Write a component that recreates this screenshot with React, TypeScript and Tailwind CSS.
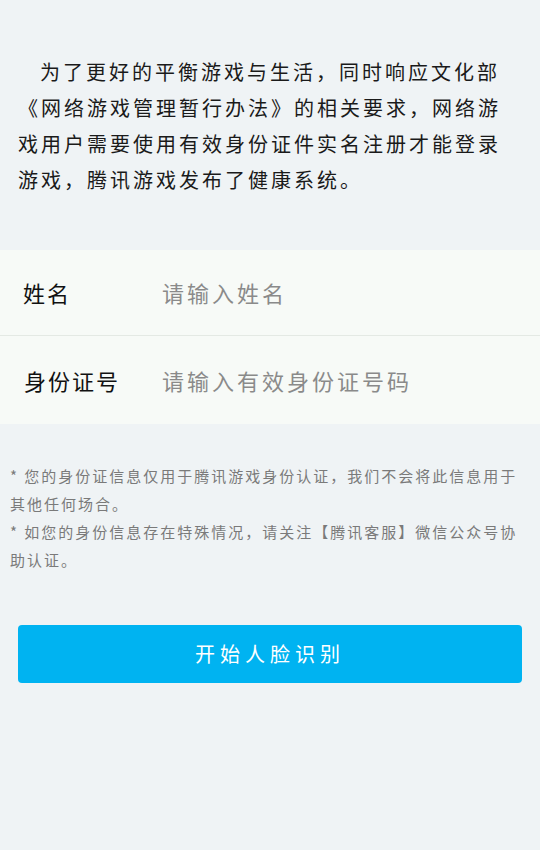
import React from "react";

const font = { fontFamily: '"Noto Sans CJK SC", "Noto Sans", sans-serif' };

export default function App() {
  return (
    <div className="min-h-[850px] w-full bg-[#eff3f5] flex flex-col" style={font}>
      <p className="px-[18px] pt-[54px] text-[20px] leading-[36px] tracking-[3px] text-[#1a1a1a] indent-[22px]">
        为了更好的平衡游戏与生活，同时响应文化部《网络游戏管理暂行办法》的相关要求，网络游戏用户需要使用有效身份证件实名注册才能登录游戏，腾讯游戏发布了健康系统。
      </p>

      <div className="mt-[52px] bg-[#f7faf7] flex flex-col">
        <div className="flex items-center h-[86px] border-b border-[#e4e9e4]">
          <span className="w-[162px] pl-[23px] text-[22px] tracking-[2px] text-[#111]">姓名</span>
          <span className="text-[22px] tracking-[3px] text-[#8a8a8a]">请输入姓名</span>
        </div>
        <div className="flex items-center h-[88px]">
          <span className="w-[162px] pl-[24px] text-[22px] tracking-[2px] text-[#111]">身份证号</span>
          <span className="text-[22px] tracking-[3px] text-[#8a8a8a]">请输入有效身份证号码</span>
        </div>
      </div>

      <div className="px-[10px] pt-[38px] text-[15px] leading-[28px] tracking-[2px] text-[#7a7a7a]">
        <p>* 您的身份证信息仅用于腾讯游戏身份认证，我们不会将此信息用于其他任何场合。</p>
        <p>* 如您的身份信息存在特殊情况，请关注【腾讯客服】微信公众号协助认证。</p>
      </div>

      <div className="px-[18px] pt-[51px]">
        <button className="w-full h-[58px] rounded-[4px] bg-[#00b3f1] text-white text-[20px] tracking-[5px] flex items-center justify-center">
          开始人脸识别
        </button>
      </div>
    </div>
  );
}
